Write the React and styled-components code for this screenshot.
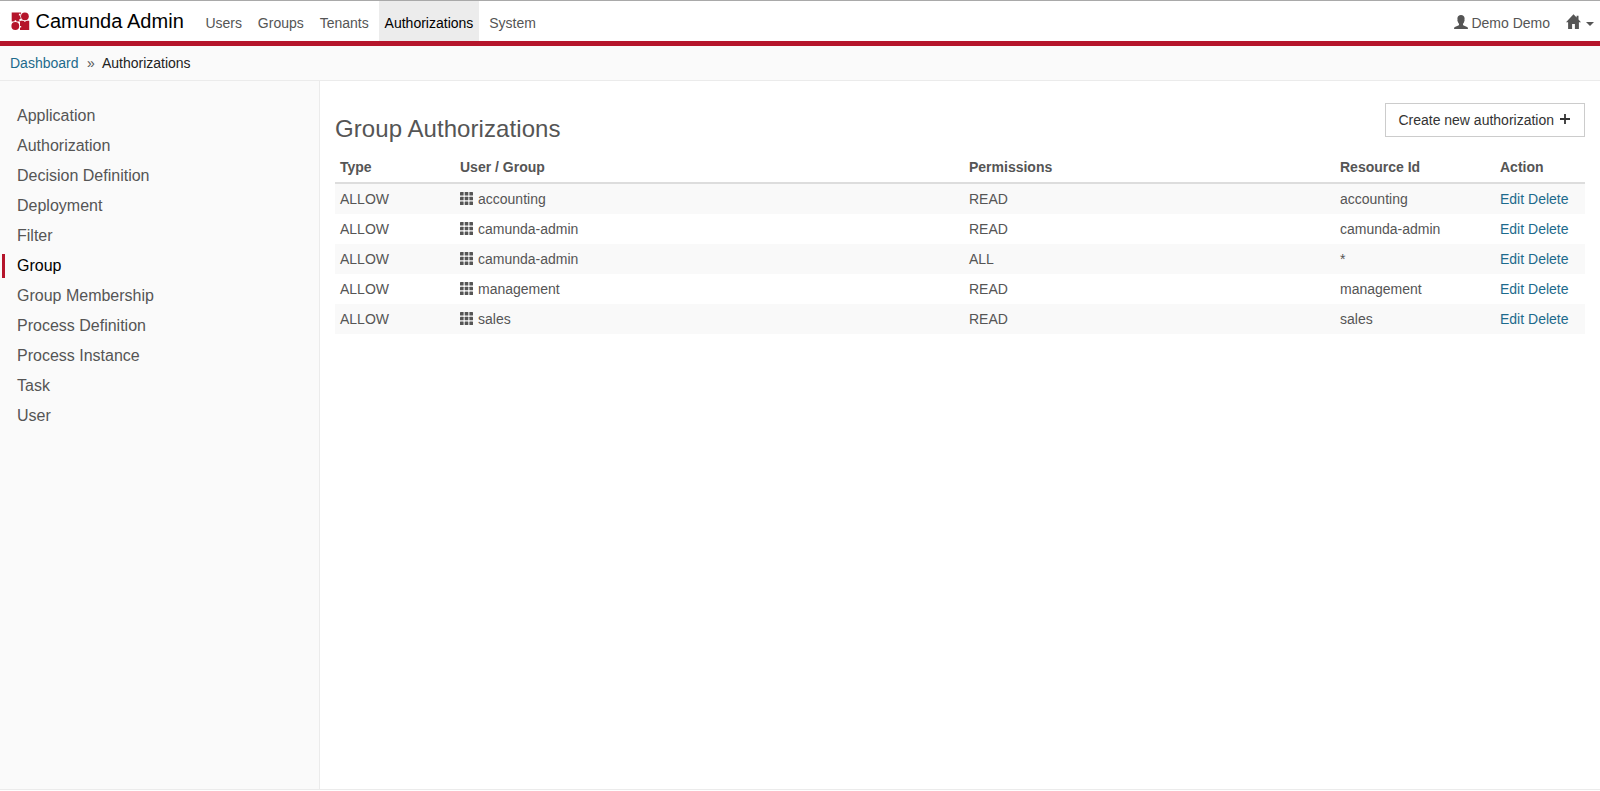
import React from "react";
import styled, { createGlobalStyle } from "styled-components";

const GlobalStyle = createGlobalStyle`
  *, *::before, *::after { box-sizing: border-box; }
  body {
    margin: 0;
    background: #fff;
    color: #555;
    font-family: "Liberation Sans", Arial, sans-serif;
    font-size: 14px;
    line-height: 20px;
  }
`;

const Page = styled.div`
  display: flex;
  flex-direction: column;
  height: 100vh;
  overflow: hidden;
  border-top: 1px solid #a9a9a9;
`;

const Header = styled.header`
  display: flex;
  flex: none;
  height: 45px;
  border-bottom: 5px solid #b5152b;
`;

const Brand = styled.a`
  display: flex;
  align-items: center;
  gap: 5.4px;
  width: 199.6px;
  padding: 0 0 0 11px;
  color: #000;
  font-size: 20px;
  letter-spacing: 0.05px;
`;

const Nav = styled.nav`
  display: flex;
  gap: 4.1px;
`;

const NavItem = styled.a`
  padding: 12px 6px 0 5.8px;
  color: ${(p) => (p.$active ? "#000" : "#555")};
  background: ${(p) => (p.$active ? "#ececec" : "transparent")};
`;

const Account = styled.div`
  display: flex;
  margin-left: auto;
  padding: 12px 6px 0 0;
`;

const AccountName = styled.span`
  display: flex;
  gap: 3.5px;
  margin-right: 16px;
`;

const HomeMenu = styled.span`
  display: flex;
  gap: 5px;
`;

const Caret = styled.i`
  width: 8px;
  height: 4px;
  margin-top: 9px;
  border-top: 4px solid #555;
  border-left: 4px solid transparent;
  border-right: 4px solid transparent;
`;

const Breadcrumbs = styled.div`
  display: flex;
  flex: none;
  height: 35px;
  padding: 7px 10px 0;
  background: #fafafa;
  border-bottom: 1px solid #ebebeb;
`;

const Separator = styled.span`
  width: 23.4px;
  padding-left: 8.4px;
`;

const Current = styled.span`
  color: #222;
`;

const Link = styled.a`
  color: #1d6a8c;
`;

const Body = styled.div`
  display: flex;
  flex: 1;
  margin-bottom: 1px;
  border-bottom: 1px solid #ebebeb;
`;

const Sidebar = styled.aside`
  width: 320px;
  flex: none;
  padding: 20px 2px;
  background: #fafafa;
  border-right: 1px solid #ebebeb;
`;

const SidebarItem = styled.a`
  display: block;
  height: 24px;
  margin: 3px 0 6px;
  padding-left: 12px;
  border-left: 3px solid ${(p) => (p.$active ? "#b5152b" : "transparent")};
  color: ${(p) => (p.$active ? "#000" : "#555")};
  font-size: 16px;
  line-height: 24px;
`;

const Main = styled.main`
  flex: 1;
  padding: 22px 15px 0;
`;

const TitleRow = styled.div`
  display: flex;
  justify-content: space-between;
  height: 49px;
`;

const Title = styled.h1`
  margin: 13px 0 0;
  font-size: 24px;
  line-height: 26px;
  font-weight: 400;
  letter-spacing: 0.07px;
`;

const CreateButton = styled.button`
  display: flex;
  align-items: center;
  gap: 6px;
  width: 200px;
  height: 34px;
  padding: 0 0 0 12.4px;
  border: 1px solid #ccc;
  background: #fff;
  color: #333;
  font: inherit;
`;

const Table = styled.table`
  width: 100%;
  table-layout: fixed;
  border-collapse: separate;
  border-spacing: 0;
`;

const HeadCell = styled.th`
  width: ${(p) => p.$width}px;
  height: 32px;
  padding: 5px;
  border-bottom: 2px solid #ddd;
  text-align: left;
  font-weight: 700;
`;

const Row = styled.tr`
  &:nth-child(odd) { background: #f9f9f9; }
`;

const Cell = styled.td`
  height: 30px;
  padding: 5px;
`;

const GroupName = styled.span`
  display: flex;
  gap: 5px;
`;

const Icon = styled.svg`
  flex: none;
  display: block;
  margin-top: ${(p) => p.$top || 0}px;
  fill: currentColor;
`;

const Logo = () => (
  <Icon width="19" height="19" viewBox="0 0 19 19">
    <path d="M.7.5h9.400v8.900H.7zM9 8.800h9.200v9.300H9z" fill="#b5152b" />
    <g fill="#fff">
      <circle cx="13.900" cy="4.300" r="4.600" />
      <circle cx="4.300" cy="14" r="4.600" />
      <path d="M7.900 1.800h1.800v1.600H7.900zM9.500 6.400l1.300 1.300-1.600 1.600-1.300-1.300zM13.100 8.600h1.500v1.200h-1.500zM3.700 8.300h1.500v1.600H3.700zM7.900 9.400l1.200 1.200-1.400 1.400-1.200-1.200zM8.600 13.900h1.600v1.500H8.600z" />
    </g>
    <g fill="#b5152b">
      <circle cx="13.900" cy="4.300" r="3.900" />
      <circle cx="4.300" cy="14" r="3.900" />
    </g>
  </Icon>
);

const UserIcon = () => (
  <Icon width="14" height="14" viewBox="0 0 14 14" $top={2}>
    <path d="M7 0C4.900 0 3.400 1.200 3.400 3.500c0 .7.1 1.200.2 1.500-.4.3-.2 1.400.3 1.700.2.9.6 1.500 1.100 2v1c0 .4-.3.700-.7.900L.9 12c-.5.200-.8.600-.8 1.100v.9h13.800v-.9c0-.5-.3-.9-.8-1.100L9.700 10.600c-.4-.2-.7-.5-.7-.9v-1c.5-.5.9-1.100 1.100-2 .5-.3.700-1.400.3-1.700.1-.3.200-.8.200-1.500C10.600 1.200 9.100 0 7 0z" />
  </Icon>
);

const HomeIcon = () => (
  <Icon width="15" height="15" viewBox="0 0 15 15" $top={1}>
    <path d="M7.500.2 0 8.200h2.100V15h4V10h2.800v5h4V8.200H15l-2.500-2.700V1.700h-1.900v1.800z" />
  </Icon>
);

const GridIcon = () => (
  <Icon width="13" height="13" viewBox="0 0 13 13" $top={3}>
    {[0, 4.7, 9.4].map((y) =>
      [0, 4.7, 9.4].map((x) => (
        <rect key={`${x}-${y}`} x={x} y={y} width="3.6" height="3.6" rx="0.5" />
      ))
    )}
  </Icon>
);

const PlusIcon = () => (
  <Icon width="10" height="10" viewBox="0 0 10 10" $top={-2}>
    <path d="M4.100 0h1.800v4.100H10v1.800H5.900V10H4.100V5.900H0V4.100h4.100z" />
  </Icon>
);

const navItems = ["Users", "Groups", "Tenants", "Authorizations", "System"];

const resources = [
  "Application",
  "Authorization",
  "Decision Definition",
  "Deployment",
  "Filter",
  "Group",
  "Group Membership",
  "Process Definition",
  "Process Instance",
  "Task",
  "User",
];

const columns = [
  ["Type", 120],
  ["User / Group", 509],
  ["Permissions", 371],
  ["Resource Id", 160],
  ["Action", 90],
];

const authorizations = [
  ["accounting", "READ", "accounting"],
  ["camunda-admin", "READ", "camunda-admin"],
  ["camunda-admin", "ALL", "*"],
  ["management", "READ", "management"],
  ["sales", "READ", "sales"],
];

export default function App() {
  return (
    <Page>
      <GlobalStyle />
      <Header>
        <Brand>
          <Logo />
          Camunda Admin
        </Brand>
        <Nav>
          {navItems.map((item) => (
            <NavItem key={item} $active={item === "Authorizations"}>
              {item}
            </NavItem>
          ))}
        </Nav>
        <Account>
          <AccountName>
            <UserIcon />
            Demo Demo
          </AccountName>
          <HomeMenu>
            <HomeIcon />
            <Caret />
          </HomeMenu>
        </Account>
      </Header>
      <Breadcrumbs>
        <Link>Dashboard</Link>
        <Separator>»</Separator>
        <Current>Authorizations</Current>
      </Breadcrumbs>
      <Body>
        <Sidebar>
          {resources.map((item) => (
            <SidebarItem key={item} $active={item === "Group"}>
              {item}
            </SidebarItem>
          ))}
        </Sidebar>
        <Main>
          <TitleRow>
            <Title>Group Authorizations</Title>
            <CreateButton>
              Create new authorization
              <PlusIcon />
            </CreateButton>
          </TitleRow>
          <Table>
            <thead>
              <tr>
                {columns.map(([label, width]) => (
                  <HeadCell key={label} $width={width}>
                    {label}
                  </HeadCell>
                ))}
              </tr>
            </thead>
            <tbody>
              {authorizations.map(([group, permissions, resource], i) => (
                <Row key={i}>
                  <Cell>ALLOW</Cell>
                  <Cell>
                    <GroupName>
                      <GridIcon />
                      {group}
                    </GroupName>
                  </Cell>
                  <Cell>{permissions}</Cell>
                  <Cell>{resource}</Cell>
                  <Cell>
                    <Link>Edit</Link> <Link>Delete</Link>
                  </Cell>
                </Row>
              ))}
            </tbody>
          </Table>
        </Main>
      </Body>
    </Page>
  );
}
